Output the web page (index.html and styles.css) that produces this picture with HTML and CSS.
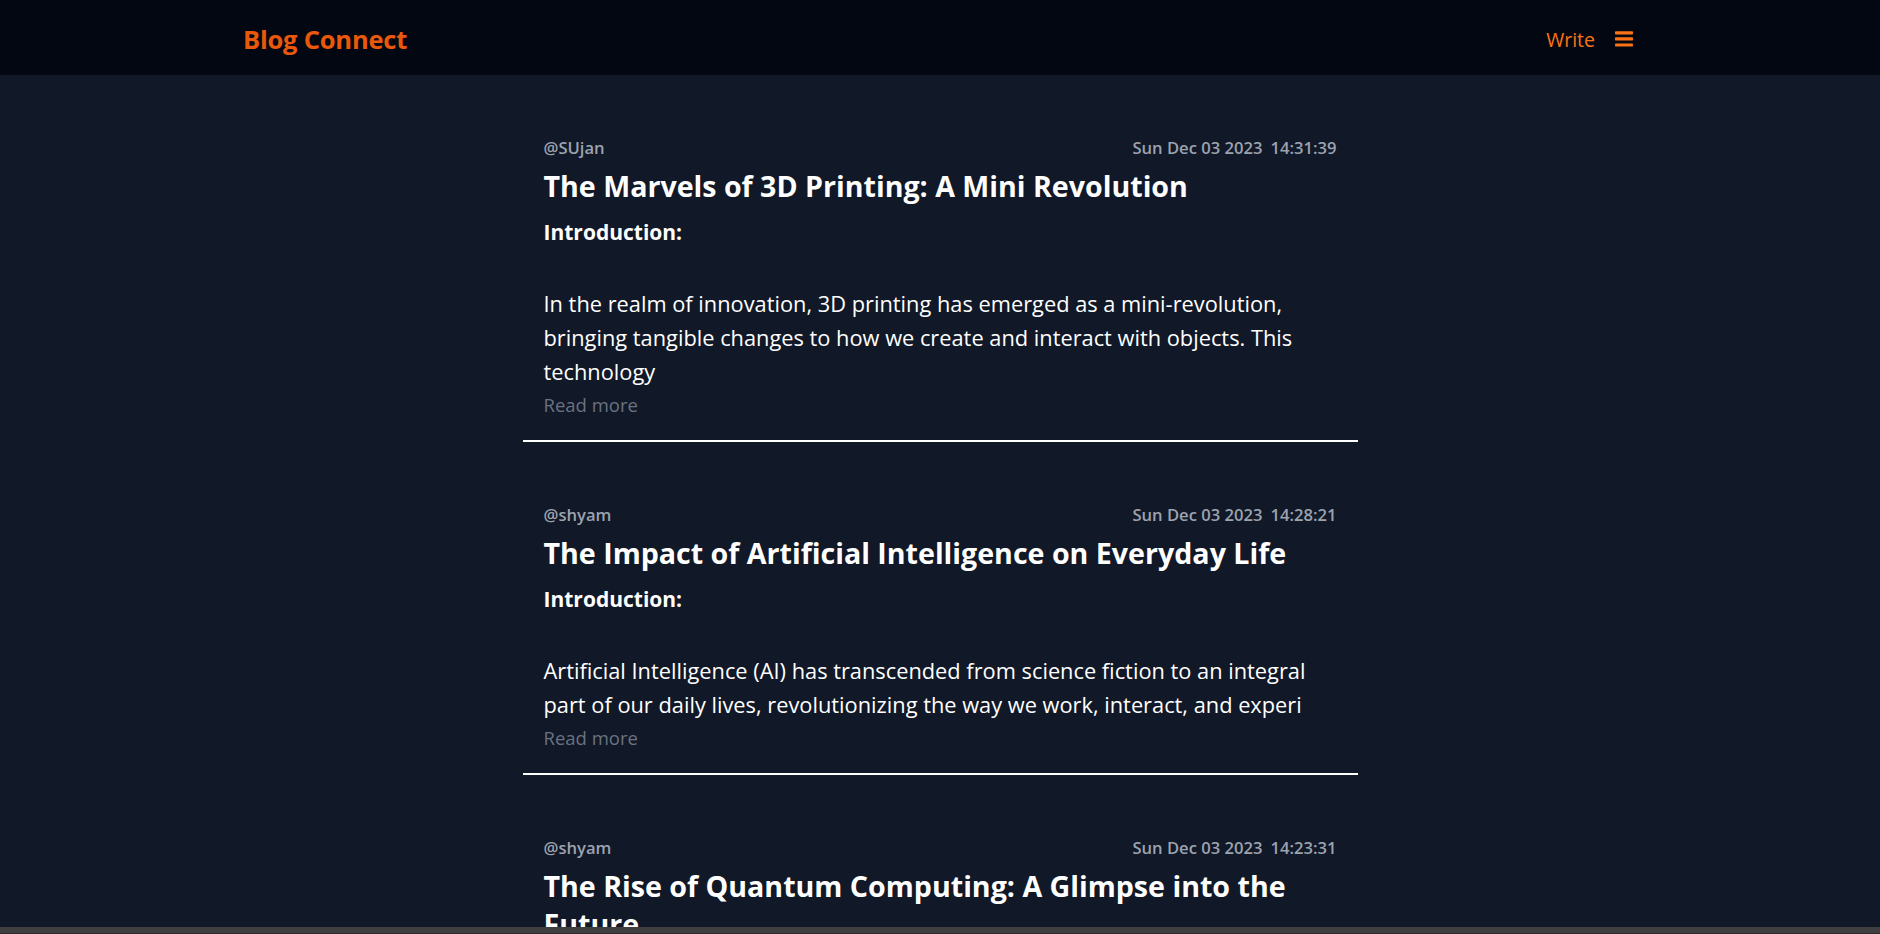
FILE: index.html
```html
<!DOCTYPE html>
<html lang="en">
<head>
<meta charset="utf-8">
<title>Blog Connect</title>
<link rel="stylesheet" href="styles.css">
</head>
<body>
<header class="topbar">
  <div class="topbar-inner">
    <a class="brand" href="#">Blog Connect</a>
    <nav class="nav">
      <a class="write" href="#">Write</a>
      <button class="menu" aria-label="Menu">
        <svg width="18" height="16" viewBox="0 0 18 16"><rect x="0" y="0.3" width="18" height="3.2" rx="0.8"/><rect x="0" y="6.3" width="18" height="3.2" rx="0.8"/><rect x="0" y="12.4" width="18" height="3.2" rx="0.8"/></svg>
      </button>
    </nav>
  </div>
</header>
<main class="feed">
  <article class="post">
    <div class="meta"><span class="author">@SUjan</span><span class="date">Sun Dec 03 2023<span class="time">14:31:39</span></span></div>
    <h2 class="title">The Marvels of 3D Printing: A Mini Revolution</h2>
    <div class="excerpt">
      <p class="intro">Introduction:</p>
      <p class="blank"></p>
      <p class="text">In the realm of innovation, 3D printing has emerged as a mini-revolution,<br>bringing tangible changes to how we create and interact with objects. This<br>technology</p>
    </div>
    <a class="more" href="#">Read more</a>
  </article>
  <article class="post">
    <div class="meta"><span class="author">@shyam</span><span class="date">Sun Dec 03 2023<span class="time">14:28:21</span></span></div>
    <h2 class="title">The Impact of Artificial Intelligence on Everyday Life</h2>
    <div class="excerpt">
      <p class="intro">Introduction:</p>
      <p class="blank"></p>
      <p class="text">Artificial Intelligence (AI) has transcended from science fiction to an integral<br>part of our daily lives, revolutionizing the way we work, interact, and experi</p>
    </div>
    <a class="more" href="#">Read more</a>
  </article>
  <article class="post">
    <div class="meta"><span class="author">@shyam</span><span class="date">Sun Dec 03 2023<span class="time">14:23:31</span></span></div>
    <h2 class="title">The Rise of Quantum Computing: A Glimpse into the Future</h2>
    <div class="excerpt">
      <p class="intro">Introduction:</p>
      <p class="blank"></p>
      <p class="text">Quantum computing, once a theoretical concept, is now stepping into reality,<br>promising to reshape the landscape of computation</p>
    </div>
    <a class="more" href="#">Read more</a>
  </article>
</main>
<div class="scrollbar"></div>
</body>
</html>
```
FILE: styles.css
```css
html, body {
  margin: 0;
  padding: 0;
}
body {
  background: #111827;
  font-family: "Open Sans", "Noto Sans", sans-serif;
  color: #ffffff;
}
a {
  text-decoration: none;
}
.topbar {
  background: #030712;
  height: 75px;
}
.topbar-inner {
  max-width: 1394px;
  height: 100%;
  margin: 0 auto;
  display: flex;
  align-items: center;
  justify-content: space-between;
}
.brand {
  color: #ea580c;
  font-weight: 700;
  font-size: 25.5px;
  letter-spacing: -0.2px;
  padding-top: 3px;
}
.nav {
  display: flex;
  align-items: center;
  gap: 20px;
  padding-top: 3px;
}
.write {
  color: #f97316;
  font-size: 19.5px;
}
.menu {
  background: none;
  border: 0;
  padding: 0;
  margin-right: 4px;
  display: flex;
  fill: #f97316;
}
.feed {
  display: flex;
  flex-direction: column;
  align-items: center;
}
.post {
  width: 835px;
  box-sizing: border-box;
  padding: 61px 21px 21px;
  border-bottom: 2px solid #ffffff;
}
.meta {
  display: flex;
  justify-content: space-between;
  height: 24px;
  line-height: 24px;
  color: #9ca3af;
  font-weight: 600;
  font-size: 16.6px;
}
.time {
  margin-left: 8px;
}
.title {
  margin: 7px 0 0;
  font-size: 28.6px;
  line-height: 38px;
  font-weight: 700;
  color: #ffffff;
}
.excerpt {
  margin-top: 10px;
  font-size: 21.8px;
  line-height: 34px;
}
.excerpt p {
  margin: 0;
}
.intro {
  font-weight: 700;
  font-size: 21px;
}
.blank {
  height: 38px;
}
.more {
  display: block;
  color: #6b7280;
  font-size: 18.5px;
  line-height: 29px;
  margin-top: 1px;
}
.scrollbar {
  position: fixed;
  left: 0;
  right: 0;
  bottom: 0;
  height: 6px;
  background: #3f3f3f;
  border-bottom: 1px solid #2a2a2a;
}
```
